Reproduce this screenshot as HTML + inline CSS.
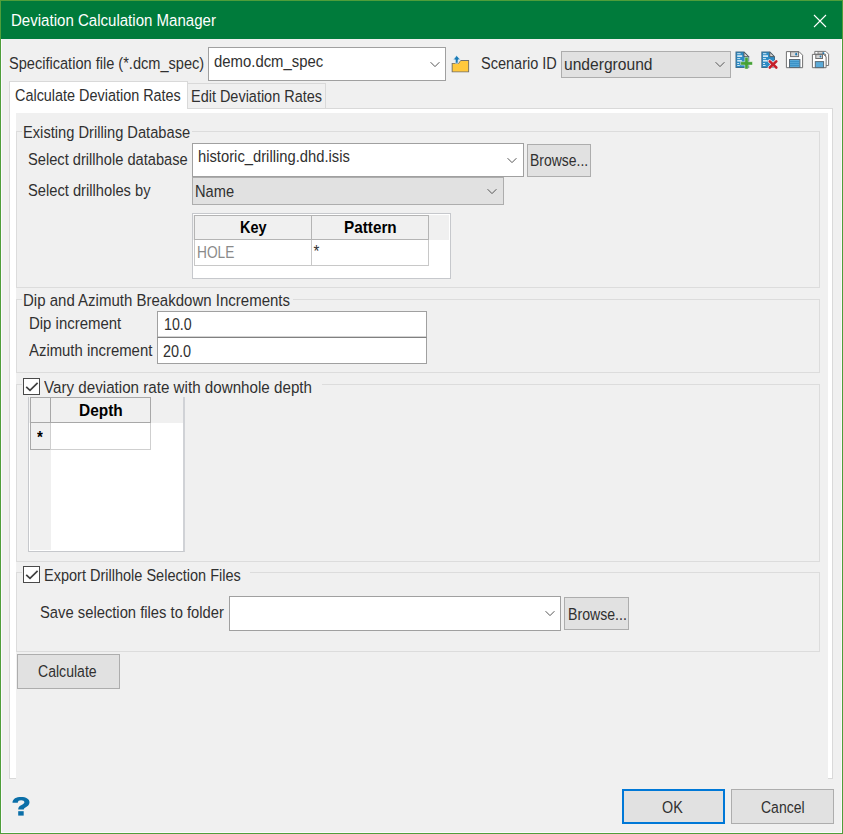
<!DOCTYPE html>
<html><head><meta charset="utf-8"><style>
html,body{margin:0;padding:0;width:843px;height:834px;overflow:hidden;background:#f0f0f0}
.b{position:absolute;box-sizing:border-box}
.t{position:absolute;transform-origin:0 0;font-family:"Liberation Sans",sans-serif;font-size:15px;line-height:20px;white-space:nowrap;color:#303030}
</style></head><body>
<div class='b' style='left:0px;top:0px;width:843px;height:834px;background:#f0f0f0;border:1px solid #4f9e3a'></div><div class='b' style='left:1px;top:832px;width:841px;height:1px;background:#fbf9fd'></div><div class='b' style='left:841px;top:39px;width:1px;height:794px;background:#fbf9fd'></div><div class='b' style='left:1px;top:39px;width:1px;height:794px;background:#fbf9fd'></div><div class='b' style='left:1px;top:1px;width:841px;height:38px;background:#007b3b'></div><div class='b' style='left:208px;top:47px;width:238px;height:34px;background:#fff;border:1px solid #a0a0a0'></div><div class='b' style='left:561px;top:51px;width:170px;height:27px;background:#e1e1e1;border:1px solid #adadad'></div><div class='b' style='left:9px;top:108px;width:824px;height:671px;background:#fff;border:1px solid #d9d9d9'></div><div class='b' style='left:9px;top:81px;width:179px;height:28px;background:#fff;border:1px solid #d9d9d9;border-bottom:none'></div><div class='b' style='left:187px;top:83px;width:139px;height:26px;background:#f0f0f0;border:1px solid #d9d9d9'></div><div class='b' style='left:16px;top:113px;width:812px;height:719px;background:#f0f0f0'></div><div class='b' style='left:16px;top:131px;width:804px;height:157px;border:1px solid #dcdcdc'></div><div class='b' style='left:16px;top:299px;width:804px;height:74px;border:1px solid #dcdcdc'></div><div class='b' style='left:16px;top:384px;width:804px;height:178px;border:1px solid #dcdcdc'></div><div class='b' style='left:16px;top:572px;width:804px;height:80px;border:1px solid #dcdcdc'></div><div class='b' style='left:22px;top:125px;width:170px;height:16px;background:#f0f0f0'></div><div class='b' style='left:22px;top:293px;width:271px;height:14px;background:#f0f0f0'></div><div class='b' style='left:22px;top:378px;width:300px;height:17px;background:#f0f0f0'></div><div class='b' style='left:22px;top:566px;width:228px;height:17px;background:#f0f0f0'></div><div class='b' style='left:192px;top:143px;width:332px;height:34px;background:#fff;border:1px solid #a0a0a0'></div><div class='b' style='left:192px;top:177px;width:312px;height:28px;background:#e1e1e1;border:1px solid #adadad'></div><div class='b' style='left:527px;top:144px;width:64px;height:33px;background:#e1e1e1;border:1px solid #adadad'></div><div class='b' style='left:192px;top:213px;width:259px;height:66px;background:#fff;border:1px solid #c6c8cc'></div><div class='b' style='left:193px;top:215px;width:256px;height:25px;background:#f0f0f0'></div><div class='b' style='left:194px;top:215px;width:118px;height:25px;background:#f0f0f0;border:1px solid #b4b4b4'></div><div class='b' style='left:311px;top:215px;width:118px;height:25px;background:#f0f0f0;border:1px solid #b4b4b4'></div><div class='b' style='left:194px;top:240px;width:118px;height:26px;background:#fff;border:1px solid #c8c8c8;border-top:none'></div><div class='b' style='left:311px;top:240px;width:118px;height:26px;background:#fff;border:1px solid #c8c8c8;border-top:none'></div><div class='b' style='left:157px;top:311px;width:270px;height:27px;background:#fff;border:1px solid #a0a0a0'></div><div class='b' style='left:157px;top:337px;width:270px;height:27px;background:#fff;border:1px solid #a0a0a0;border-top-color:#808080'></div><div class='b' style='left:158px;top:336px;width:268px;height:1px;background:#d4d4d4'></div><div class='b' style='left:23px;top:378px;width:17px;height:17px;background:#fff;border:1px solid #4a4a4a'></div><div class='b' style='left:23px;top:566px;width:17px;height:17px;background:#fff;border:1px solid #4a4a4a'></div><div class='b' style='left:28px;top:397px;width:157px;height:155px;background:#fff;border:1px solid #c6c8cc;border-top:none;border-right:2px solid #d0d2d6'></div><div class='b' style='left:30px;top:397px;width:21px;height:153px;background:#f0f0f0'></div><div class='b' style='left:29px;top:397px;width:154px;height:26px;background:#f0f0f0'></div><div class='b' style='left:30px;top:397px;width:21px;height:26px;background:#f0f0f0;border:1px solid #a8a8a8'></div><div class='b' style='left:50px;top:397px;width:101px;height:26px;background:#f0f0f0;border:1px solid #a8a8a8'></div><div class='b' style='left:30px;top:423px;width:21px;height:27px;background:#f0f0f0;border:1px solid #a8a8a8;border-top:none'></div><div class='b' style='left:50px;top:423px;width:101px;height:27px;background:#fff;border:1px solid #cfcfcf;border-top:none'></div><div class='b' style='left:229px;top:596px;width:332px;height:35px;background:#fff;border:1px solid #a0a0a0'></div><div class='b' style='left:564px;top:597px;width:65px;height:33px;background:#e1e1e1;border:1px solid #adadad'></div><div class='b' style='left:17px;top:654px;width:103px;height:35px;background:#e1e1e1;border:1px solid #adadad'></div><div class='b' style='left:622px;top:789px;width:103px;height:35px;background:#e1e1e1;border:2px solid #0078d7'></div><div class='b' style='left:731px;top:789px;width:103px;height:35px;background:#e1e1e1;border:1px solid #adadad'></div>
<svg class='b' style='left:430px;top:61px' width='10' height='8' viewBox='0 0 10 8'><path d='M0.6 1.2 L5 5.6 L9.4 1.2' fill='none' stroke='#555555' stroke-width='1'/></svg><svg class='b' style='left:715px;top:61px' width='10' height='8' viewBox='0 0 10 8'><path d='M0.6 1.2 L5 5.6 L9.4 1.2' fill='none' stroke='#555555' stroke-width='1'/></svg><svg class='b' style='left:507px;top:157px' width='10' height='8' viewBox='0 0 10 8'><path d='M0.6 1.2 L5 5.6 L9.4 1.2' fill='none' stroke='#555555' stroke-width='1'/></svg><svg class='b' style='left:487px;top:188px' width='10' height='8' viewBox='0 0 10 8'><path d='M0.6 1.2 L5 5.6 L9.4 1.2' fill='none' stroke='#555555' stroke-width='1'/></svg><svg class='b' style='left:545px;top:610px' width='10' height='8' viewBox='0 0 10 8'><path d='M0.6 1.2 L5 5.6 L9.4 1.2' fill='none' stroke='#555555' stroke-width='1'/></svg><svg class='b' style='left:813px;top:14px' width='14' height='14' viewBox='0 0 14 14'><path d='M1 1 L13 13 M13 1 L1 13' stroke='#fff' stroke-width='1.1'/></svg><svg class='b' style='left:23px;top:378px' width='17' height='17' viewBox='0 0 17 17'><path d='M3.2 8.8 L7 12.4 L14.6 4.9' fill='none' stroke='#404040' stroke-width='1.7'/></svg><svg class='b' style='left:23px;top:566px' width='17' height='17' viewBox='0 0 17 17'><path d='M3.2 8.8 L7 12.4 L14.6 4.9' fill='none' stroke='#404040' stroke-width='1.7'/></svg>
<svg class='b' style='left:448px;top:52px' width='24' height='24' viewBox='0 0 24 24'>
<path d='M12.8 7.9 L21.1 7.9 L21.1 20.3 L3.7 20.3 L3.7 10.9 L10.3 10.9 Z' fill='#6e6e6e'/>
<path d='M4.6 11.8 L10.7 11.8 L12.7 9.1 L20.2 9.1 L20.2 19.4 L4.6 19.4 Z' fill='#ffc83d'/>
<path d='M8.7 3.4 L12.3 7.8 L10.1 7.8 L10.1 11.2 L7.3 11.2 L7.3 7.8 L5.1 7.8 Z' fill='#1a7ab5' stroke='#e8f2f8' stroke-width='0.7' stroke-linejoin='round'/>
</svg><svg class='b' style='left:732px;top:48px' width='24' height='24' viewBox='0 0 24 24'>
<path d='M3.5 3.5 L12.3 3.5 L17.2 8.4 L17.2 20 L3.5 20 Z' fill='#3f6d8c'/>
<path d='M4.5 4.5 L11.9 4.5 L16.2 8.8 L16.2 19 L4.5 19 Z' fill='#2c8cc6'/>
<path d='M12 4.2 L12 8.6 L16.6 8.6 Z' fill='#d9d9d9' stroke='#555' stroke-width='0.9'/>
<g fill='#cfe6f4'>
<rect x='5.2' y='5.2' width='3.4' height='1'/>
<rect x='5.2' y='7.2' width='5' height='1.8'/>
<rect x='5.2' y='10.1' width='3' height='1'/>
<rect x='5.2' y='12' width='4.6' height='1.6'/>
<rect x='5.2' y='15' width='2' height='1'/>
<rect x='5.2' y='17' width='2.6' height='1'/>
</g>
<path d='M12.8 9.3 L16.2 9.3 L16.2 13.7 L20.5 13.7 L20.5 17.1 L16.2 17.1 L16.2 21.1 L12.8 21.1 L12.8 17.1 L8.6 17.1 L8.6 13.7 L12.8 13.7 Z' fill='#45a136' stroke='#f2f8f1' stroke-width='0.5'/>
</svg><svg class='b' style='left:757px;top:48px' width='24' height='24' viewBox='0 0 24 24'>
<path d='M4.3 3.5 L13.100000000000001 3.5 L18.0 8.4 L18.0 20 L4.3 20 Z' fill='#3f6d8c'/>
<path d='M5.3 4.5 L12.700000000000001 4.5 L17.0 8.8 L17.0 19 L5.3 19 Z' fill='#2c8cc6'/>
<path d='M12.8 4.2 L12.8 8.6 L17.400000000000002 8.6 Z' fill='#d9d9d9' stroke='#555' stroke-width='0.9'/>
<g fill='#cfe6f4'>
<rect x='6.0' y='5.2' width='3.4' height='1'/>
<rect x='6.0' y='7.2' width='5' height='1.8'/>
<rect x='6.0' y='10.1' width='3' height='1'/>
<rect x='6.0' y='12' width='4.6' height='1.6'/>
<rect x='6.0' y='15' width='2' height='1'/>
<rect x='6.0' y='17' width='2.6' height='1'/>
</g>
<path d='M12.6 13.2 L19.4 19.6 M19.4 13.2 L12.6 19.6' stroke='#f8eeee' stroke-width='3.8' stroke-linecap='round'/>
<path d='M12.8 13.4 L19.3 19.5 M19.3 13.4 L12.8 19.5' stroke='#c41e2a' stroke-width='2.6' stroke-linecap='round'/>
</svg><svg class='b' style='left:782px;top:48px' width='24' height='24' viewBox='0 0 24 24'>
<path d='M4.4 3.6 L17 3.6 L20.6 7.2 L20.6 19.7 L4.4 19.7 Z' fill='#fff' stroke='#707070' stroke-width='1'/>
<rect x='8.6' y='3.8' width='8' height='4.8' fill='#d6d6d6' stroke='#707070' stroke-width='1'/>
<ellipse cx='14.2' cy='6.2' rx='0.9' ry='1.4' fill='#1a7ab5'/>
<rect x='7.5' y='11.5' width='10.4' height='8' fill='#5aaad8' stroke='#5a6a75' stroke-width='1'/>
<g fill='#2f88bf'><rect x='8' y='13.3' width='9.4' height='0.8'/><rect x='8' y='15.3' width='9.4' height='0.8'/><rect x='8' y='17.3' width='9.4' height='0.8'/></g>
</svg><svg class='b' style='left:808px;top:48px' width='24' height='24' viewBox='0 0 24 24'>
<path d='M6.8 3.4 L17.8 3.4 L20.6 6.2 L20.6 17.5 L17.6 17.5 L17.6 6.2 L6.8 6.2 Z' fill='#fff' stroke='#777' stroke-width='1'/>
<rect x='10' y='3.6' width='5' height='2.4' fill='#d6d6d6' stroke='#777' stroke-width='0.8'/>
<circle cx='15.5' cy='5.2' r='0.9' fill='#1a7ab5'/>
<path d='M4.4 6.4 L15.6 6.4 L18.1 8.9 L18.1 19.7 L4.4 19.7 Z' fill='#fff' stroke='#707070' stroke-width='1'/>
<rect x='7.8' y='6.6' width='6.7' height='3.9' fill='#d6d6d6' stroke='#707070' stroke-width='1'/>
<circle cx='12.5' cy='8.5' r='0.9' fill='#1a7ab5'/>
<rect x='7.3' y='13.6' width='8.3' height='6' fill='#5aaad8' stroke='#5a6a75' stroke-width='1'/>
</svg><svg class='b' style='left:8px;top:792px' width='28' height='28' viewBox='0 0 28 28'>
<path d='M4.5 10.7 C4.5 6.6 8.3 4.9 13.1 4.9 C18.1 4.9 21.5 6.9 21.5 10.2 C21.5 12.9 19.6 14.3 17.4 15.4 C16.2 16 15.8 16.6 15.8 17.6 L10.2 17.6 C10.2 15.5 11 14.3 13.1 13.2 C15.1 12.2 16.4 11.5 16.4 10.3 C16.4 9 15.1 8.2 13.1 8.2 C11.1 8.2 9.8 9 9.8 10.7 Z' fill='#0b6fa8'/>
<rect x='10.2' y='19.2' width='5.5' height='4.4' fill='#0b6fa8'/>
</svg>
<div class='t' style='left:11.0px;top:9.8px;transform:scale(1.0034,1.07);color:#fff'>Deviation Calculation Manager</div><div class='t' style='left:9.0px;top:52.5px;transform:scale(0.9714,1.07);'>Specification file (*.dcm_spec)</div><div class='t' style='left:213.9px;top:50.5px;transform:scale(0.9926,1.07);'>demo.dcm_spec</div><div class='t' style='left:481.4px;top:53.2px;transform:scale(0.9675,1.07);'>Scenario ID</div><div class='t' style='left:563.7px;top:53.9px;transform:scale(1.0410,1.07);'>underground</div><div class='t' style='left:15.3px;top:84.7px;transform:scale(0.9608,1.07);'>Calculate Deviation Rates</div><div class='t' style='left:191.2px;top:86.0px;transform:scale(0.9637,1.07);'>Edit Deviation Rates</div><div class='t' style='left:23.2px;top:122.0px;transform:scale(0.9781,1.07);'>Existing Drilling Database</div><div class='t' style='left:28.0px;top:148.8px;transform:scale(0.9772,1.07);'>Select drillhole database</div><div class='t' style='left:198.0px;top:146.2px;transform:scale(0.9843,1.07);'>historic_drilling.dhd.isis</div><div class='t' style='left:530.3px;top:150.2px;transform:scale(0.9300,1.07);'>Browse...</div><div class='t' style='left:28.0px;top:180.1px;transform:scale(0.9798,1.07);'>Select drillholes by</div><div class='t' style='left:195.1px;top:180.8px;transform:scale(0.9769,1.07);'>Name</div><div class='t' style='left:239.6px;top:217.1px;transform:scale(0.9667,1.07);font-weight:bold;color:#000'>Key</div><div class='t' style='left:343.6px;top:217.1px;transform:scale(1.0200,1.07);font-weight:bold;color:#000'>Pattern</div><div class='t' style='left:196.6px;top:241.8px;transform:scale(0.9154,1.07);color:#8a8a8a'>HOLE</div><div class='t' style='left:313.5px;top:241.4px;transform:scale(1.0000,1.07);'>*</div><div class='t' style='left:23.2px;top:289.6px;transform:scale(1.0008,1.07);'>Dip and Azimuth Breakdown Increments</div><div class='t' style='left:28.6px;top:313.4px;transform:scale(0.9967,1.07);'>Dip increment</div><div class='t' style='left:164.1px;top:314.1px;transform:scale(0.9464,1.07);'>10.0</div><div class='t' style='left:28.5px;top:340.4px;transform:scale(0.9927,1.07);'>Azimuth increment</div><div class='t' style='left:163.0px;top:341.1px;transform:scale(0.9643,1.07);'>20.0</div><div class='t' style='left:44.2px;top:376.9px;transform:scale(1.0117,1.07);'>Vary deviation rate with downhole depth</div><div class='t' style='left:78.8px;top:400.1px;transform:scale(1.0293,1.07);font-weight:bold;color:#000'>Depth</div><div class='t' style='left:37.0px;top:426.9px;transform:scale(1.0000,1.07);font-weight:bold;color:#000'>*</div><div class='t' style='left:44.2px;top:565.2px;transform:scale(0.9673,1.07);'>Export Drillhole Selection Files</div><div class='t' style='left:40.2px;top:602.2px;transform:scale(0.9849,1.07);'>Save selection files to folder</div><div class='t' style='left:567.6px;top:603.6px;transform:scale(0.9417,1.07);'>Browse...</div><div class='t' style='left:38.3px;top:660.6px;transform:scale(0.9377,1.07);'>Calculate</div><div class='t' style='left:662.3px;top:796.5px;transform:scale(0.9550,1.07);'>OK</div><div class='t' style='left:760.6px;top:796.5px;transform:scale(0.9333,1.07);'>Cancel</div>
</body></html>
